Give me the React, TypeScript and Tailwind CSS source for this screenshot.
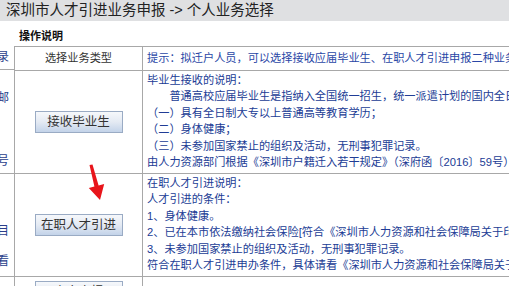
import React from "react";

const font = "font-['Liberation_Sans','Noto_Sans_CJK_SC',sans-serif]";

const graduateLines = [
  "毕业生接收的说明：",
  "　　普通高校应届毕业生是指纳入全国统一招生，统一派遣计划的国内全日制普通高校毕业生。",
  "（一）具有全日制大专以上普通高等教育学历；",
  "（二）身体健康；",
  "（三）未参加国家禁止的组织及活动，无刑事犯罪记录。",
  "由人力资源部门根据《深圳市户籍迁入若干规定》（深府函〔2016〕59号）的规定办理。",
];

const talentLines = [
  "在职人才引进说明：",
  "人才引进的条件：",
  "1、身体健康。",
  "2、已在本市依法缴纳社会保险[符合《深圳市人力资源和社会保障局关于印发》的规定]；",
  "3、未参加国家禁止的组织及活动，无刑事犯罪记录。",
  "符合在职人才引进申办条件，具体请看《深圳市人力资源和社会保障局关于》的规定。",
];

function ActionButton({ label }: { label: string }) {
  return (
    <button className="h-[22px] w-[88px] border border-[#9aabc4] bg-gradient-to-b from-[#f6f8fb] via-[#e4eaf3] to-[#c3d3e9] text-[12.5px] leading-none text-[#333]">
      {label}
    </button>
  );
}

function Row({ label, lines }: { label: string; lines: string[] }) {
  return (
    <div className="flex h-[103px] border-b border-[#a8a8a8]">
      <div className="flex w-[128px] shrink-0 items-center justify-center border-r border-[#a8a8a8]">
        <ActionButton label={label} />
      </div>
      <div className="flex-1 whitespace-nowrap pl-[4px] pt-[1px] text-[11.2px] leading-[16.4px] text-[#213c95]">
        {lines.map((line, i) => (
          <div key={i}>{line}</div>
        ))}
      </div>
    </div>
  );
}

function StripCell({ h, items }: { h: string; items: { char: string; pt: string }[] }) {
  return (
    <div className={`${h} flex flex-col items-end overflow-hidden border-b border-[#a8a8a8] text-[12px] leading-[12px] text-[#2b3f8c]`}>
      {items.map((it, i) => (
        <div key={i} className={`${it.pt} mr-[5px] whitespace-nowrap`}>
          {it.char}
        </div>
      ))}
    </div>
  );
}

export default function App() {
  return (
    <div className={`relative h-[286px] w-[509px] overflow-hidden bg-white ${font}`}>
      <div className="flex h-[21px] items-center bg-[#dfe0e2] pl-[6px] text-[14.5px] text-[#222]">
        深圳市人才引进业务申报 -&gt; 个人业务选择
      </div>

      <div className="flex">
        <div className="w-[14px] shrink-0">
          <StripCell h="h-[49px]" items={[{ char: "记录", pt: "pt-[30px]" }]} />
          <StripCell
            h="h-[104px]"
            items={[
              { char: "邮", pt: "pt-[22px]" },
              { char: "号", pt: "pt-[51px]" },
            ]}
          />
          <StripCell
            h="h-[103px]"
            items={[
              { char: "目", pt: "pt-[51px]" },
              { char: "看", pt: "pt-[18px]" },
            ]}
          />
        </div>

        <div className="flex-1">
          <div className="h-[25px] pl-[5px] pt-[9px] text-[11px] font-bold leading-[12px] text-[#111]">
            操作说明
          </div>
          <div className="w-[700px] border-l border-t border-[#a8a8a8]">
            <div className="flex h-[24px] border-b border-[#a8a8a8]">
              <div className="flex w-[128px] shrink-0 items-center justify-center border-r border-[#a8a8a8] text-[11.2px] text-[#333]">
                选择业务类型
              </div>
              <div className="flex flex-1 items-center whitespace-nowrap pl-[4px] text-[11.2px] text-[#2a47a6]">
                提示：拟迁户人员，可以选择接收应届毕业生、在职人才引进申报二种业务类型。
              </div>
            </div>
            <Row label="接收毕业生" lines={graduateLines} />
            <Row label="在职人才引进" lines={talentLines} />
            <div className="flex h-[60px]">
              <div className="flex w-[128px] shrink-0 justify-center border-r border-[#a8a8a8] pt-[4px]">
                <ActionButton label="个人申报" />
              </div>
              <div className="flex-1" />
            </div>
          </div>
        </div>
      </div>

      <svg className="pointer-events-none absolute left-0 top-0" width="509" height="286">
        <polygon
          points="89.5,165 92.5,164.6 98.6,185.5 104.2,184 100,200 88.8,188 94.4,186.5"
          fill="#e8151b"
        />
      </svg>
    </div>
  );
}
